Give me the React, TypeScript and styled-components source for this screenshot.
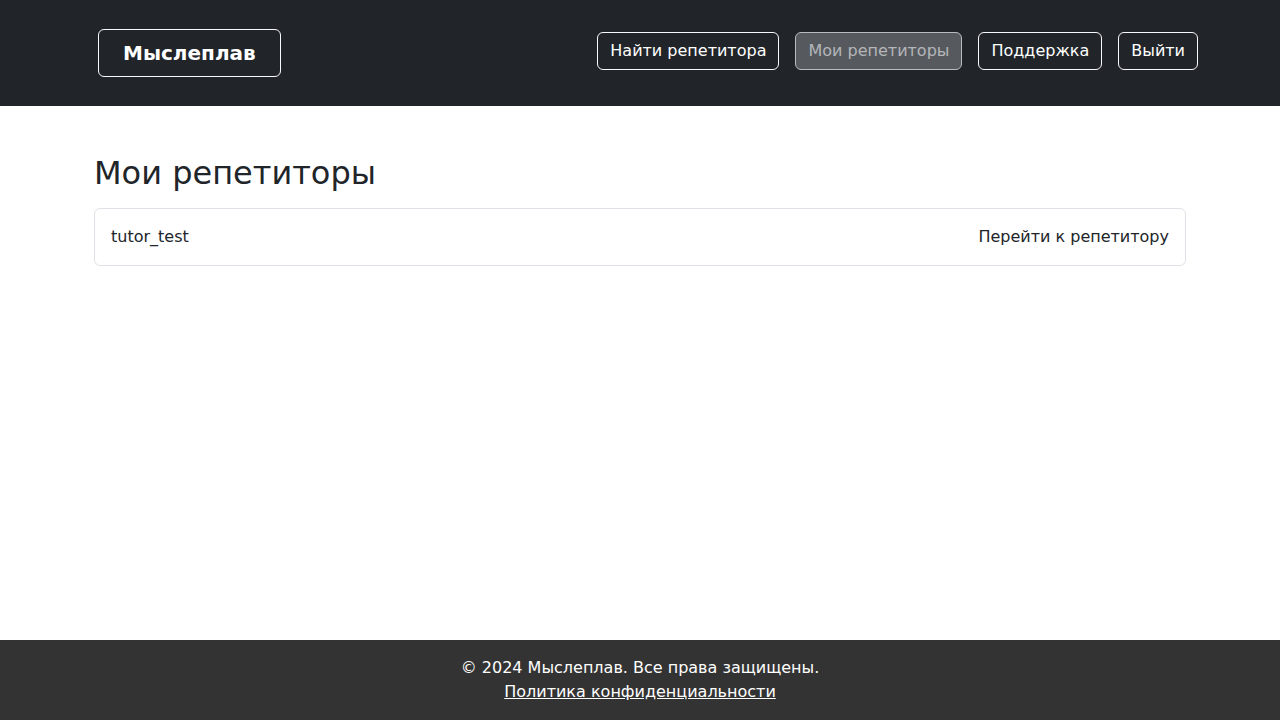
import React from "react";
import styled, { createGlobalStyle } from "styled-components";

const GlobalStyle = createGlobalStyle`
  html, body { margin: 0; padding: 0; }
  body {
    font-family: "DejaVu Sans", sans-serif;
    font-size: 16px;
    line-height: 1.5;
    color: #212529;
    background: #fff;
  }
  * { box-sizing: border-box; }
`;

const Page = styled.div`
  display: flex;
  flex-direction: column;
  min-height: 720px;
`;

const Header = styled.header`
  background: #212529;
  height: 106px;
  display: flex;
  justify-content: center;
`;

const HeaderInner = styled.div`
  width: 1140px;
  padding: 0 12px;
  display: flex;
  align-items: center;
  justify-content: space-between;
`;

const Brand = styled.a`
  margin-left: 16px;
  display: inline-block;
  padding: 8px 24px;
  border: 1px solid #f8f9fa;
  border-radius: 6px;
  color: #fff;
  font-weight: 700;
  font-size: 20px;
  line-height: 30px;
  text-decoration: none;
`;

const Nav = styled.nav`
  display: flex;
  gap: 16px;
  margin-bottom: 4px;
`;

const NavButton = styled.a<{ $active?: boolean }>`
  display: inline-block;
  padding: 6px 12px;
  border: 1px solid ${(p) => (p.$active ? "#b9bbbe" : "#f8f9fa")};
  border-radius: 6px;
  background: ${(p) => (p.$active ? "#565a5f" : "transparent")};
  color: ${(p) => (p.$active ? "#b3b5b8" : "#fff")};
  font-size: 16px;
  line-height: 24px;
  text-decoration: none;
`;

const Main = styled.main`
  flex: 1;
  display: flex;
  justify-content: center;
  padding-top: 48px;
`;

const Container = styled.div`
  width: 1116px;
  padding: 0 12px;
  margin-left: 12px;
  margin-right: 12px;
  width: 1092px;
  padding: 0;
`;

const Title = styled.h2`
  margin: 0 0 16px;
  font-size: 32px;
  line-height: 1.2;
  font-weight: 500;
  color: #212529;
`;

const Card = styled.div`
  border: 1px solid #dee2e6;
  border-radius: 6px;
  padding: 16px;
  display: flex;
  justify-content: space-between;
  align-items: center;
`;

const CardLink = styled.a`
  color: #212529;
  text-decoration: none;
`;

const Footer = styled.footer`
  background: #333;
  color: #fff;
  text-align: center;
  padding: 16px;
  line-height: 24px;
`;

const FooterLink = styled.a`
  color: #fff;
  text-decoration: underline;
`;

export default function App() {
  return (
    <>
      <GlobalStyle />
      <Page>
        <Header>
          <HeaderInner>
            <Brand href="#">Мыслеплав</Brand>
            <Nav>
              <NavButton href="#">Найти репетитора</NavButton>
              <NavButton href="#" $active>
                Мои репетиторы
              </NavButton>
              <NavButton href="#">Поддержка</NavButton>
              <NavButton href="#">Выйти</NavButton>
            </Nav>
          </HeaderInner>
        </Header>
        <Main>
          <Container>
            <Title>Мои репетиторы</Title>
            <Card>
              <span>tutor_test</span>
              <CardLink href="#">Перейти к репетитору</CardLink>
            </Card>
          </Container>
        </Main>
        <Footer>
          <div>© 2024 Мыслеплав. Все права защищены.</div>
          <FooterLink href="#">Политика конфиденциальности</FooterLink>
        </Footer>
      </Page>
    </>
  );
}
